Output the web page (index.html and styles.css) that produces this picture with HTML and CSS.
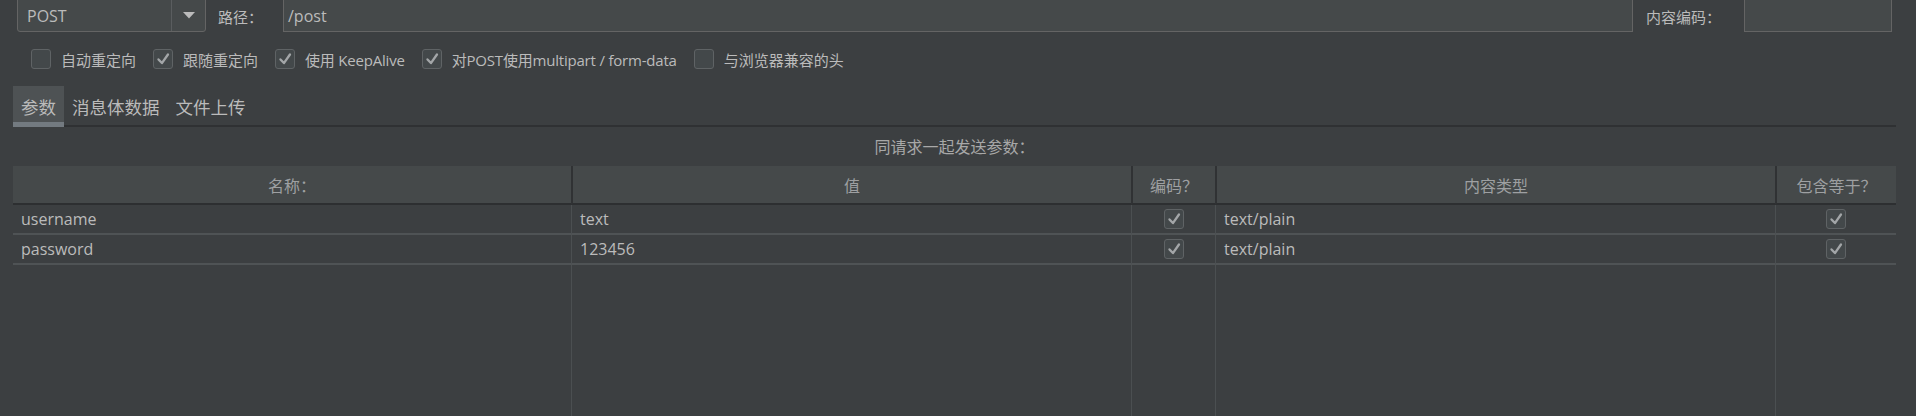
FILE: index.html
```html
<!DOCTYPE html>
<html lang="zh-CN">
<head>
<meta charset="utf-8">
<title>HTTP Request</title>
<link rel="stylesheet" href="styles.css">
</head>
<body>
<div class="page">
  <div class="toprow">
    <div class="combo">
      <span class="combo-value">POST</span>
      <span class="combo-arrow"><svg width="12" height="7" viewBox="0 0 12 7"><path d="M0 0 H12 L6 6.5 Z" fill="#bbbbbb"/></svg></span>
    </div>
    <span class="lbl path-lbl">路径：</span>
    <div class="field path-field">/post</div>
    <span class="lbl enc-lbl">内容编码：</span>
    <div class="field enc-field"></div>
  </div>

  <div class="opts">
    <label class="opt"><span class="cb"></span>自动重定向</label>
    <label class="opt"><span class="cb"><svg class="ck" viewBox="0 0 20 20"><path d="M5 10.5 L8.8 14.5 L15.5 5"/></svg></span>跟随重定向</label>
    <label class="opt latin"><span class="cb"><svg class="ck" viewBox="0 0 20 20"><path d="M5 10.5 L8.8 14.5 L15.5 5"/></svg></span>使用 KeepAlive</label>
    <label class="opt latin"><span class="cb"><svg class="ck" viewBox="0 0 20 20"><path d="M5 10.5 L8.8 14.5 L15.5 5"/></svg></span>对POST使用multipart / form-data</label>
    <label class="opt"><span class="cb"></span>与浏览器兼容的头</label>
  </div>

  <div class="tabs">
    <div class="tab active">参数</div>
    <div class="tab">消息体数据</div>
    <div class="tab">文件上传</div>
  </div>

  <div class="caption">同请求一起发送参数：</div>

  <div class="grid">
    <div class="hc">名称：</div>
    <div class="hc">值</div>
    <div class="hc">编码？</div>
    <div class="hc">内容类型</div>
    <div class="hc">包含等于？</div>

    <div class="bc">username</div>
    <div class="bc">text</div>
    <div class="bc center"><span class="cb"><svg class="ck" viewBox="0 0 20 20"><path d="M5 10.5 L8.8 14.5 L15.5 5"/></svg></span></div>
    <div class="bc">text/plain</div>
    <div class="bc center"><span class="cb"><svg class="ck" viewBox="0 0 20 20"><path d="M5 10.5 L8.8 14.5 L15.5 5"/></svg></span></div>

    <div class="bc">password</div>
    <div class="bc">123456</div>
    <div class="bc center"><span class="cb"><svg class="ck" viewBox="0 0 20 20"><path d="M5 10.5 L8.8 14.5 L15.5 5"/></svg></span></div>
    <div class="bc">text/plain</div>
    <div class="bc center"><span class="cb"><svg class="ck" viewBox="0 0 20 20"><path d="M5 10.5 L8.8 14.5 L15.5 5"/></svg></span></div>

    <div class="fc"></div>
    <div class="fc"></div>
    <div class="fc"></div>
    <div class="fc"></div>
    <div class="fc"></div>
  </div>
</div>
</body>
</html>
```

FILE: styles.css
```css
html, body {
  margin: 0;
  padding: 0;
  background: #3c3f41;
  width: 1916px;
  height: 416px;
  overflow: hidden;
}

body {
  font-family: "Open Sans", "Noto Sans CJK SC", sans-serif;
  color: #bbbbbb;
}

.page {
  width: 1896px;
  height: 416px;
  overflow: hidden;
}

/* top row */
.toprow {
  display: flex;
  align-items: center;
  height: 35px;
  margin-top: -3px;
  padding-left: 17px;
  padding-right: 4px;
}

.combo {
  display: flex;
  width: 189px;
  height: 35px;
  box-sizing: border-box;
  border: 1px solid #646464;
  border-radius: 3px;
  background: #45494a;
}

.combo-value {
  flex: 1;
  display: flex;
  align-items: center;
  padding-left: 9px;
  font-size: 16px;
  padding-top: 2px;
}

.combo-arrow {
  width: 33px;
  border-left: 1px solid #5a5d5f;
  display: flex;
  align-items: center;
  justify-content: center;
  padding-top: 2px;
}

.lbl {
  font-size: 15px;
  padding-top: 3px;
}

.path-lbl {
  margin-left: 12px;
  width: 65px;
}

.enc-lbl {
  margin-left: 13px;
  width: 98px;
}

.field {
  height: 35px;
  box-sizing: border-box;
  border: 1px solid #646464;
  border-top: none;
  background: #45494a;
  font-size: 16px;
  display: flex;
  align-items: center;
  padding-top: 4px;
}

.path-field {
  flex: 1;
  padding-left: 4px;
}

.enc-field {
  width: 148px;
}

/* options */
.opts {
  display: flex;
  align-items: center;
  gap: 17px;
  margin-top: 17px;
  height: 20px;
  padding-left: 31px;
}

.opt {
  display: flex;
  align-items: center;
  gap: 10px;
  font-size: 15px;
  white-space: nowrap;
}

.opt.latin {
  letter-spacing: -0.2px;
}

.cb {
  width: 20px;
  height: 20px;
  box-sizing: border-box;
  border: 1px solid #5f6365;
  border-radius: 3px;
  background: #43484a;
  display: inline-flex;
  flex: none;
}

.ck {
  width: 18px;
  height: 18px;
}

.ck path {
  fill: none;
  stroke: #a3a6a8;
  stroke-width: 2.6;
  stroke-linecap: round;
  stroke-linejoin: round;
}

/* tabs */
.tabs {
  display: flex;
  margin-top: 17px;
  margin-left: 13px;
  height: 39px;
  border-bottom: 2px solid #2f3133;
}

.tab {
  padding: 11px 8px 0 8px;
  line-height: 20px;
  font-size: 17.5px;
  height: 41px;
  box-sizing: border-box;
}

.tab.active {
  background: #4e5254;
  border-bottom: 5px solid #737a80;
  margin-bottom: -2px;
}

/* caption */
.caption {
  margin-left: 13px;
  height: 39px;
  box-sizing: border-box;
  padding-top: 10px;
  line-height: 20px;
  text-align: center;
  font-size: 16px;
  color: #a8a8a8;
}

/* table */
.grid {
  margin-left: 13px;
  display: grid;
  grid-template-columns: 558px 560px 84px 560px 1fr;
}

.hc {
  height: 39px;
  box-sizing: border-box;
  background: #45494a;
  border-bottom: 2px solid #2d2f31;
  display: flex;
  align-items: center;
  justify-content: center;
  font-size: 16px;
  color: #9ea0a2;
}

.hc + .hc {
  border-left: 2px solid #303234;
}

.bc {
  height: 30px;
  box-sizing: border-box;
  border-bottom: 2px solid #4f5355;
  display: flex;
  align-items: center;
  padding-left: 8px;
  font-size: 16px;
  color: #bbbbbb;
}

.bc:not(:nth-child(5n+1)),
.fc:not(:nth-child(5n+1)) {
  border-left: 1px solid #4b4f51;
}

.bc.center {
  justify-content: center;
  padding-left: 0;
}

.fc {
  height: 160px;
}
```
